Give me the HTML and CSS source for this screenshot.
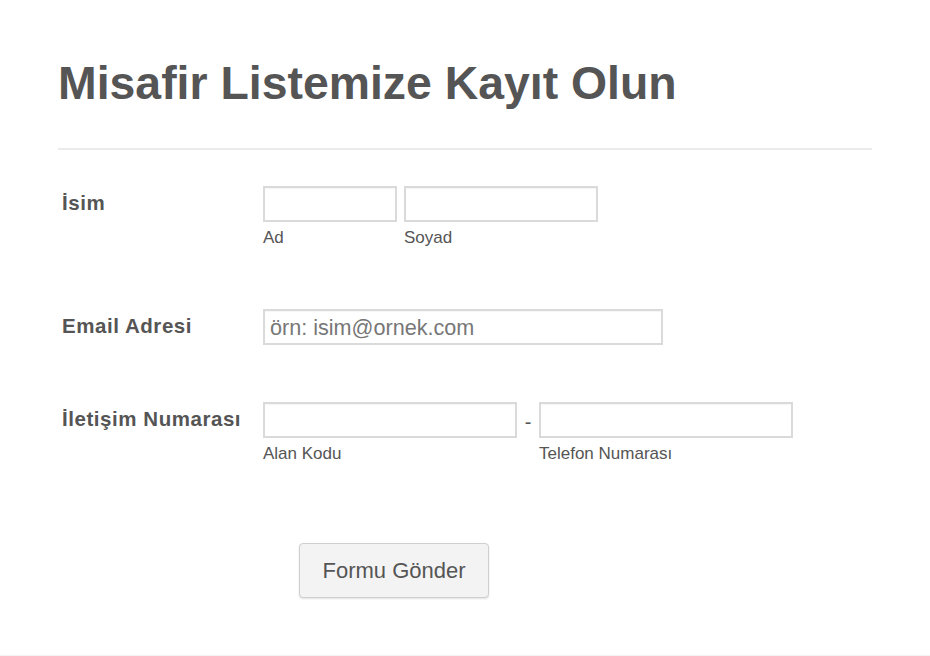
FILE: index.html
```html
<!DOCTYPE html>
<html lang="tr">
<head>
<meta charset="utf-8">
<title>Misafir Listemize Kayıt Olun</title>
<link rel="stylesheet" href="styles.css">
</head>
<body>
<main class="form">
  <header class="form-header">
    <h1 class="form-title">Misafir Listemize Kayıt Olun</h1>
  </header>
  <div class="row row-name">
    <label class="row-label">İsim</label>
    <div class="fields">
      <div class="field">
        <input class="input input-first" type="text">
        <span class="sublabel">Ad</span>
      </div>
      <div class="field">
        <input class="input input-last" type="text">
        <span class="sublabel">Soyad</span>
      </div>
    </div>
  </div>
  <div class="row row-email">
    <label class="row-label">Email Adresi</label>
    <div class="fields">
      <input class="input input-email" type="text" placeholder="örn: isim@ornek.com">
    </div>
  </div>
  <div class="row row-phone">
    <label class="row-label">İletişim Numarası</label>
    <div class="fields">
      <div class="field">
        <input class="input input-phone" type="text">
        <span class="sublabel">Alan Kodu</span>
      </div>
      <span class="dash">-</span>
      <div class="field">
        <input class="input input-phone" type="text">
        <span class="sublabel">Telefon Numarası</span>
      </div>
    </div>
  </div>
  <div class="actions">
    <button class="submit" type="button">Formu Gönder</button>
  </div>
</main>
<div class="bottom-line"></div>
</body>
</html>
```

FILE: styles.css
```css
html, body {
  margin: 0;
  padding: 0;
  background: #fff;
}
body {
  font-family: "Liberation Sans", Arial, sans-serif;
  color: #555;
  width: 930px;
  height: 656px;
  overflow: hidden;
  position: relative;
}
.form {
  margin-left: 58px;
  width: 814px;
  padding-top: 55px;
}
.form-header {
  border-bottom: 2px solid #ebebeb;
  padding-bottom: 37px;
}
.form-title {
  margin: 0;
  font-size: 46.4px;
  line-height: 56px;
  font-weight: bold;
  color: #555;
}
.row {
  display: flex;
  align-items: flex-start;
  padding-left: 4px;
}
.row-name { margin-top: 36px; }
.row-email { margin-top: 62px; }
.row-phone { margin-top: 57px; }
.row-label {
  width: 201px;
  flex: none;
  font-size: 20.5px;
  letter-spacing: 0.55px;
  font-weight: bold;
  line-height: 24px;
  padding-top: 5px;
  color: #555;
}
.fields {
  display: flex;
  align-items: flex-start;
  gap: 7px;
}
.field {
  display: flex;
  flex-direction: column;
}
.input {
  box-sizing: border-box;
  height: 36px;
  border: 2px solid #dadada;
  border-radius: 0;
  box-shadow: inset 0 1px 1px rgba(0,0,0,0.04);
  background: #fff;
  margin: 0;
  padding: 0 6px;
  font-family: "Liberation Sans", Arial, sans-serif;
  font-size: 21.6px;
  color: #555;
  outline: none;
}
.input::placeholder {
  color: #777;
}
.input-first { width: 134px; }
.input-last { width: 194px; }
.input-email { width: 400px; padding-left: 5px; padding-top: 2px; }
.input-phone { width: 254px; }
.sublabel {
  font-size: 17px;
  line-height: 18px;
  margin-top: 7px;
  color: #555;
}
.dash {
  font-size: 20px;
  line-height: 24px;
  padding-top: 8px;
  width: 12px;
  text-align: center;
  margin: 0 -2px;
}
.actions {
  padding-left: 241px;
  margin-top: 80px;
}
.submit {
  box-sizing: border-box;
  width: 190px;
  height: 55px;
  border: 1px solid #cfcfcf;
  border-radius: 4px;
  background: #f3f3f3;
  box-shadow: 0 1px 2px rgba(0,0,0,0.12);
  font-family: "Liberation Sans", Arial, sans-serif;
  font-size: 22px;
  color: #555;
  padding: 0;
  margin: 0;
}
.bottom-line {
  position: absolute;
  left: 0;
  right: 0;
  bottom: 0;
  height: 1px;
  background: #f3f3f3;
}
```
